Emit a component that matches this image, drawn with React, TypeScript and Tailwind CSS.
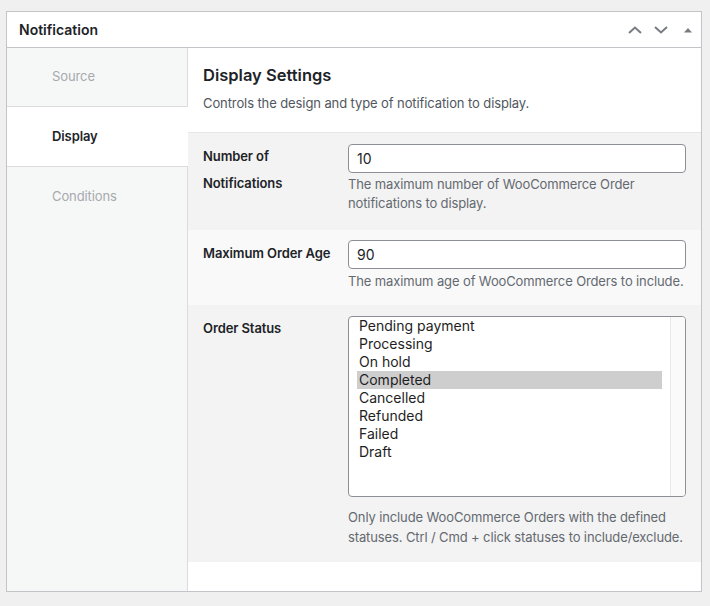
import React from 'react';

const tabs = [
  { label: 'Source', active: false },
  { label: 'Display', active: true },
  { label: 'Conditions', active: false },
];

const statuses = ['Pending payment', 'Processing', 'On hold', 'Completed', 'Cancelled', 'Refunded', 'Failed', 'Draft'];

const HeaderIcons: React.FC = () => (
  <div className="flex items-center gap-[10px] pr-[8px] text-[#787c82]">
    <svg width="16" height="10" viewBox="0 0 16 10" fill="none" stroke="currentColor" strokeWidth="2">
      <path d="M2 8 L8 2.5 L14 8" />
    </svg>
    <svg width="16" height="10" viewBox="0 0 16 10" fill="none" stroke="currentColor" strokeWidth="2">
      <path d="M2 2 L8 7.5 L14 2" />
    </svg>
    <svg width="10" height="10" viewBox="0 0 10 10" fill="currentColor" className="ml-[4px]">
      <path d="M1 7.5 L5 3 L9 7.5 Z" />
    </svg>
  </div>
);

const TextField: React.FC<{ value: string }> = ({ value }) => (
  <div className="h-[29px] w-[338px] rounded-[4px] border border-[#8c8f94] bg-white px-[8px] flex items-center text-[14px] text-[#1d2327]">
    {value}
  </div>
);

const App: React.FC = () => {
  return (
    <div
      className="min-h-screen bg-[#f0f0f1] pt-[11px] pl-[6px]"
      style={{ fontFamily: 'Inter, "Liberation Sans", sans-serif' }}
    >
      <div className="w-[696px] border border-[#c3c4c7] bg-white">
        {/* panel header */}
        <div className="h-[36px] border-b border-[#c3c4c7] flex items-center justify-between pl-[12px]">
          <h2 className="text-[14px] font-semibold text-[#1d2327]">Notification</h2>
          <HeaderIcons />
        </div>

        <div className="flex h-[543px]">
          {/* tabs */}
          <div className="w-[181px] flex flex-col bg-[#f6f7f7]">
            {tabs.map((tab, i) => (
              <div
                key={tab.label}
                className={`${i === 0 ? 'h-[59px]' : 'h-[60px]'} flex items-center pl-[45px] text-[13px] tracking-[-0.1px] ${
                  i < tabs.length - 1 ? 'border-b border-[#dcdcde]' : ''
                } ${tab.active ? 'bg-white font-semibold text-[#1d2327]' : 'border-r border-r-[#dcdcde] text-[#a7aaad]'}`}
              >
                {tab.label}
              </div>
            ))}
            <div className="flex-1 border-r border-[#dcdcde]" />
          </div>

          {/* settings */}
          <div className="flex-1 flex flex-col bg-white">
            <div className="pl-[15px] pt-[15px] pb-[19px] border-b border-[#e6e6e6]">
              <h3 className="text-[16.5px] leading-[24px] font-semibold text-[#1d2327]">Display Settings</h3>
              <p className="mt-[6px] text-[13px] leading-[20px] tracking-[-0.1px] text-[#50575e]">
                Controls the design and type of notification to display.
              </p>
            </div>

            <div className="flex bg-[#f3f3f3] pl-[15px] pt-[11px] pb-[17px]">
              <div className="w-[145px] -mt-[1px] text-[13px] leading-[27px] font-semibold tracking-[-0.1px] text-[#1d2327]">
                Number of
                <br />
                Notifications
              </div>
              <div>
                <TextField value="10" />
                <p className="mt-[2px] w-[338px] text-[13px] leading-[19px] tracking-[-0.12px] text-[#646970]">
                  The maximum number of WooCommerce Order notifications to display.
                </p>
              </div>
            </div>

            <div className="flex bg-[#f9f9f9] pl-[15px] pt-[10px] pb-[14px]">
              <div className="w-[145px] text-[13px] leading-[27px] font-semibold tracking-[-0.1px] text-[#1d2327]">
                Maximum Order Age
              </div>
              <div>
                <TextField value="90" />
                <p className="mt-[3px] w-[345px] text-[13px] leading-[19px] tracking-[-0.12px] text-[#646970]">
                  The maximum age of WooCommerce Orders to include.
                </p>
              </div>
            </div>

            <div className="flex bg-[#f3f3f3] pl-[15px] pt-[10px] pb-[15px]">
              <div className="w-[145px] text-[13px] leading-[27px] font-semibold tracking-[-0.1px] text-[#1d2327]">
                Order Status
              </div>
              <div>
                <div className="mt-[1px] h-[181px] w-[338px] rounded-[4px] border border-[#8c8f94] bg-white flex overflow-hidden">
                  <div className="flex-1 pt-[0px] pl-[8px] pr-[8px]">
                    {statuses.map((s) => (
                      <div
                        key={s}
                        className={`h-[18px] pl-[2px] text-[14px] leading-[18px] text-[#1e1e1e] ${
                          s === 'Completed' ? 'bg-[#cecece]' : ''
                        }`}
                      >
                        {s}
                      </div>
                    ))}
                  </div>
                  <div className="w-[15px] bg-[#fafafa] border-l border-[#e8e8e8]" />
                </div>
                <p className="mt-[10px] w-[345px] text-[13px] leading-[20px] tracking-[-0.12px] text-[#646970]">
                  Only include WooCommerce Orders with the defined statuses. Ctrl / Cmd + click statuses to
                  include/exclude.
                </p>
              </div>
            </div>

            <div className="flex-1 bg-white" />
          </div>
        </div>
      </div>
    </div>
  );
};

export default App;
